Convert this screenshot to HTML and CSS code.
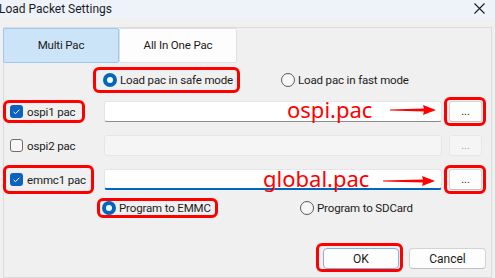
FILE: index.html
```html
<!DOCTYPE html>
<html lang="en">
<head>
    <meta charset="UTF-8">
    <title>Load Packet Settings</title>
    <link rel="stylesheet" href="styles.css">
</head>
<body>

<div class="titlebar">
    <span class="title">Load Packet Settings</span>
    <svg class="close" width="11" height="11" viewBox="0 0 11 11"><path d="M0.5 0.5L10.5 10.5M10.5 0.5L0.5 10.5" stroke="#1c1c1c" stroke-width="1.1" fill="none"/></svg>
</div>

<div class="panel">
    <div class="tabs">
        <div class="tab active">Multi Pac</div>
        <div class="tab">All In One Pac</div>
    </div>

    <div class="options mode">
        <span></span>
        <label class="opt mark"><span class="radio on"></span>Load pac in safe mode</label>
        <label class="opt plain"><span class="radio"></span>Load pac in fast mode</label>
    </div>

    <div class="pacrow">
        <label class="chk mark"><span class="box on"><svg width="13" height="13" viewBox="0 0 13 13"><path d="M3.6 6.9L5.5 8.7L9.4 4.7" stroke="#fff" stroke-width="1" fill="none"/></svg></span>ospi1 pac</label>
        <div class="field">
            <span class="note ospi">ospi.pac</span>
            <svg class="arrow ospi-arrow" width="46" height="10" viewBox="0 0 46 10"><polygon points="0,4.4 34,3.4 33,0 46,5 33,10 34,6.6 0,5.6" fill="#f00"/></svg>
        </div>
        <span class="mark pick"><button class="dots">...</button></span>
    </div>

    <div class="pacrow">
        <label class="chk"><span class="box"></span>ospi2 pac</label>
        <div class="field disabled"></div>
        <button class="dots off">...</button>
    </div>

    <div class="pacrow">
        <label class="chk mark tall"><span class="box on"><svg width="13" height="13" viewBox="0 0 13 13"><path d="M3.6 6.9L5.5 8.7L9.4 4.7" stroke="#fff" stroke-width="1" fill="none"/></svg></span>emmc1 pac</label>
        <div class="field focus">
            <span class="note global">global.pac</span>
            <svg class="arrow global-arrow" width="52" height="10" viewBox="0 0 52 10"><polygon points="0,4.4 40,3.4 39,0 52,5 39,10 40,6.6 0,5.6" fill="#f00"/></svg>
        </div>
        <span class="mark pick"><button class="dots">...</button></span>
    </div>

    <div class="options target">
        <span></span>
        <label class="opt mark"><span class="radio on"></span>Program to EMMC</label>
        <label class="opt plain"><span class="radio"></span>Program to SDCard</label>
    </div>

    <div class="actions">
        <span class="mark okwrap"><button class="btn default">OK</button></span>
        <button class="btn">Cancel</button>
    </div>
</div>

</body>
</html>
```

FILE: styles.css
```css
body {
    margin: 0;
    width: 495px;
    height: 278px;
    overflow: hidden;
    background-color: #f0f0f0;
    font-family: Roboto, "Noto Sans", sans-serif;
    font-size: 11.5px;
    letter-spacing: -0.15px;
    color: #1b1b1b;
}

.titlebar {
    height: 18px;
    line-height: 18px;
    background-color: #eef3fa;
    display: flex;
    justify-content: space-between;
    padding-right: 10px;
    margin-bottom: 9px;
    font-size: 12px;
    letter-spacing: 0;
}
.title {
    text-indent: -1px;
}
.close {
    margin-top: 3px;
}

.panel {
    box-sizing: border-box;
    margin-left: 3px;
    width: 489px;
    height: 251px;
    border: 1px solid #dcdcdc;
    background-color: #f0f0f0;
}

/* tabs */
.tabs {
    display: flex;
    margin-left: -1px;
    height: 35px;
}
.tab {
    box-sizing: border-box;
    width: 118px;
    height: 35px;
    line-height: 33px;
    text-align: center;
    background-color: #fdfdfd;
    border: 1px solid #e0e0e0;
    border-radius: 2px;
}
.tab.active {
    width: 116px;
    background-color: #cce4f7;
    border-color: #9ec8ec;
}

/* red marks */
.mark {
    outline: 3px solid #f00;
    border-radius: 3px;
}

/* radio options */
.options {
    display: grid;
    align-items: center;
}
.mode {
    grid-template-columns: 92px 185px auto;
    height: 20px;
    margin-top: 7px;
}
.target {
    grid-template-columns: 96px 200px auto;
    height: 14px;
    margin-top: 10px;
}
.opt {
    display: flex;
    align-items: center;
    justify-self: start;
    height: 100%;
    white-space: nowrap;
}
.mode .opt.mark {
    padding: 0 4px 0 7px;
}
.target .opt.mark {
    padding: 0 4px 0 2px;
}
.radio {
    box-sizing: border-box;
    width: 14px;
    height: 14px;
    border-radius: 50%;
    border: 1px solid #5a5a5a;
    background-color: #f7f7f7;
    margin-right: 3px;
    flex: none;
}
.radio.on {
    border: 4px solid #0067c0;
    background-color: #fff;
}

/* pac rows */
.pacrow {
    display: grid;
    grid-template-columns: 100px 338px auto;
    align-items: center;
    height: 23px;
    margin-top: 11px;
}
.mode + .pacrow {
    margin-top: 10px;
}
.chk {
    display: flex;
    align-items: center;
    height: 17px;
    margin-left: 2px;
    padding: 0 7px 0 4px;
    white-space: nowrap;
    justify-self: start;
}
.chk.tall {
    height: 23px;
    padding-right: 5px;
}
.box {
    box-sizing: border-box;
    width: 13px;
    height: 13px;
    border: 1px solid #6e6e6e;
    border-radius: 3px;
    background-color: #f7f7f7;
    margin-right: 4px;
    flex: none;
}
.box.on {
    border: none;
    background-color: #0c62be;
}
.box svg {
    display: block;
}

.field {
    position: relative;
    box-sizing: border-box;
    height: 21px;
    background-color: #fff;
    border: 1px solid #e5e5e5;
    border-bottom-color: #8c8c8c;
    border-radius: 3px;
}
.field.disabled {
    background-color: #f5f5f5;
    border-color: #e5e5e5;
}
.field.focus {
    border-bottom: 2px solid #0067c0;
}

.note {
    position: absolute;
    color: #f00;
    font-family: "Noto Sans", sans-serif;
    font-size: 22px;
    line-height: 22px;
    letter-spacing: 0;
    white-space: nowrap;
}
.note.ospi {
    left: 182px;
    top: -4px;
}
.note.global {
    left: 158px;
    top: -3px;
}
.arrow {
    position: absolute;
}
.ospi-arrow {
    left: 285px;
    top: 3px;
}
.global-arrow {
    left: 278px;
    top: 6px;
}

.pick {
    display: block;
    justify-self: start;
    margin-left: 5px;
    padding: 1px 1px 1px 2px;
}
.dots {
    box-sizing: border-box;
    display: block;
    width: 33px;
    height: 21px;
    padding: 0;
    font-family: inherit;
    font-size: 11px;
    line-height: 14px;
    color: #1b1b1b;
    background-color: #fdfdfd;
    border: 1px solid #d6d6d6;
    border-bottom-color: #c2c2c2;
    border-radius: 3px;
}
.dots.off {
    margin-left: 7px;
    color: #a0a0a0;
    background-color: #f5f5f5;
    border-color: #e8e8e8;
}

/* bottom buttons */
.actions {
    display: flex;
    justify-content: flex-end;
    align-items: flex-end;
    margin-top: 31px;
    padding-right: 5px;
}
.okwrap {
    display: block;
    padding: 2px 1px 0 4px;
}
.btn {
    box-sizing: border-box;
    display: block;
    width: 77px;
    height: 21px;
    padding: 0;
    font-family: inherit;
    font-size: 12px;
    color: #1b1b1b;
    background-color: #fdfdfd;
    border: 1px solid #d3d3d3;
    border-bottom-color: #c0c0c0;
    border-radius: 4px;
    margin-left: 9px;
}
.btn.default {
    width: 76px;
    margin-left: 0;
    border-color: #80b3e3;
}
```
